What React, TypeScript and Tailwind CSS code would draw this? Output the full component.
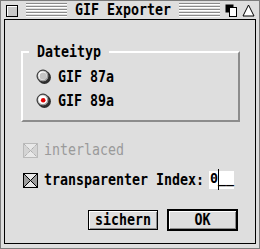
import React from "react";

const mono = "font-['DejaVu_Sans_Mono',monospace] font-bold text-[13.3px] leading-[16px]";
const tall = "inline-block scale-y-[1.15]";

function TitleLines() {
  return (
    <div className="flex-1 flex flex-col gap-px">
      {[0, 1, 2, 3, 4].map((i) => (
        <div key={i} className="flex flex-col">
          <div className="h-px bg-[#8a8a8a]" />
          <div className="h-px bg-white" />
        </div>
      ))}
    </div>
  );
}

function Radio({ checked }: { checked?: boolean }) {
  return (
    <svg width="16" height="16" viewBox="0 0 16 16" className="shrink-0">
      <circle cx="8.4" cy="8.4" r="6.5" fill="#2e2e2e" />
      <circle cx="7" cy="7" r="6" fill="#9c9c9c" stroke="#2a2a2a" strokeWidth="1" />
      <circle cx="6.6" cy="6.6" r="4.4" fill="#ffffff" />
      <circle cx="7.2" cy="7.2" r="3.6" fill={checked ? "#ffffff" : "#c4c4c4"} />
      {checked ? <circle cx="7.2" cy="7.2" r="2.3" fill="#e00000" /> : null}
    </svg>
  );
}

function CheckBox({ disabled }: { disabled?: boolean }) {
  const ink = disabled ? "#9a9a9a" : "#000";
  return (
    <svg width="15" height="15" viewBox="0 0 15 15" className="shrink-0">
      <rect x="0.5" y="0.5" width="14" height="14" fill={disabled ? "#d4d4d4" : "#9c9c9c"} stroke={ink} strokeDasharray={disabled ? "1 1" : undefined} />
      <polygon points="1,1 14,1 7.5,7.5" fill="#e8e8e8" />
      <polygon points="1,14 14,14 7.5,7.5" fill="#e8e8e8" />
      <path d="M1 1 L14 14 M14 1 L1 14" stroke={ink} strokeWidth="1" strokeDasharray={disabled ? "1 1" : undefined} />
    </svg>
  );
}

export default function App() {
  return (
    <div className="w-[260px] h-[249px] bg-[#dedede] border border-[#7c7c7c] flex flex-col select-none">
      {/* Titelzeile */}
      <div className="h-[18px] flex items-center pl-[5px] pr-[4px]">
        <div className="w-[12px] h-[12px] mt-[2px] border border-black bg-[#c8c8c8] shadow-[inset_1px_1px_0_#fff]" />
        <div className="flex-1 flex items-center ml-[8px] gap-[8px]">
          <TitleLines />
          <span className={mono + " text-black"}>
            <span className={tall}>GIF Exporter</span>
          </span>
          <TitleLines />
        </div>
        <svg width="13" height="13" viewBox="0 0 13 13" className="ml-[5px]">
          <rect x="0.5" y="0.5" width="8" height="8" fill="#000" />
          <rect x="4.5" y="3.5" width="7" height="9" fill="#fff" stroke="#000" />
        </svg>
        <svg width="13" height="13" viewBox="0 0 13 13" className="ml-[4px]">
          <polygon points="6.5,1 12,12 1,12" fill="#fff" stroke="#000" strokeWidth="1" />
        </svg>
      </div>

      {/* Inhalt */}
      <div className="mx-[3px] h-[225px] border border-black flex flex-col px-[16px]">
        <fieldset className="mt-[24px] border-t-2 border-l-2 border-white border-r-2 border-b-2 border-r-[#8c8c8c] border-b-[#8c8c8c] pl-[6px] pr-0 pb-[11px] mr-[-1px]">
          <legend className={mono + " px-[8px] text-black"}>
            <span className={tall}>Dateityp</span>
          </legend>
          <div className="flex flex-col gap-[8px] pl-[7px] pt-[9px]">
            <div className="flex items-center gap-[6px]">
              <Radio />
              <span className={mono + " text-black"}>
                <span className={tall}>GIF 87a</span>
              </span>
            </div>
            <div className="flex items-center gap-[6px]">
              <Radio checked />
              <span className={mono + " text-black"}>
                <span className={tall}>GIF 89a</span>
              </span>
            </div>
          </div>
        </fieldset>

        <div className="flex items-center gap-[6px] mt-[20px] pl-[2px]">
          <CheckBox disabled />
          <span className={mono + " font-normal text-[#9a9a9a]"}>
            <span className={tall}>interlaced</span>
          </span>
        </div>

        <div className="flex items-center gap-[6px] mt-[13px] pl-[2px]">
          <CheckBox />
          <span className={mono + " text-black"}>
            <span className={tall}>transparenter Index:</span>
          </span>
          <div className="relative ml-[-1px] w-[25px] h-[18px] bg-white pl-px pt-px">
            <span className="block font-['DejaVu_Sans_Mono',monospace] font-bold text-[13.3px] leading-[14px] text-black whitespace-pre">0__</span>
            <div className="absolute left-[9px] top-[-2px] w-px h-[21px] bg-black" />
          </div>
        </div>

        <div className="flex justify-end items-center gap-[9px] mt-[20px] pr-[1px]">
          <button className={mono + " w-[70px] h-[20px] border border-black bg-[#dedede] shadow-[inset_1px_1px_0_#fff,inset_-1px_-1px_0_#8c8c8c] text-black flex items-center justify-center"}>
            <span className={tall}>sichern</span>
          </button>
          <button className={mono + " w-[71px] h-[22px] border-2 border-black bg-[#dedede] shadow-[inset_1px_1px_0_#fff,inset_-1px_-1px_0_#8c8c8c] text-black flex items-center justify-center"}>
            <span className={tall}>OK</span>
          </button>
        </div>
      </div>
    </div>
  );
}
